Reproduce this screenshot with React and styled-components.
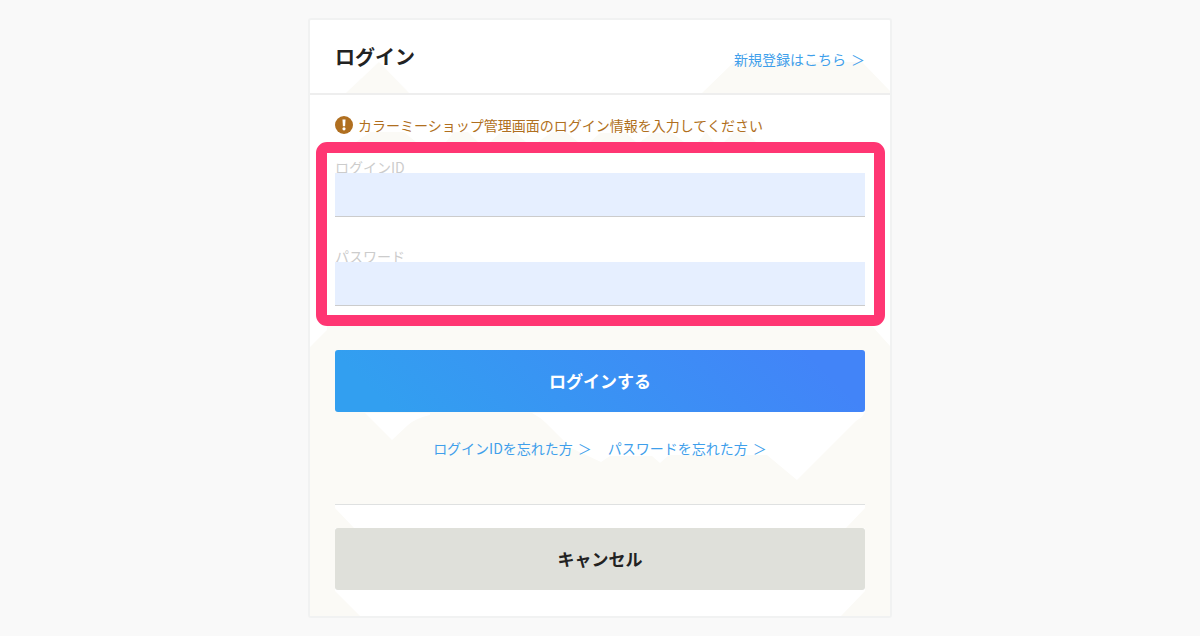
import React, { useState } from "react";
import styled, { createGlobalStyle } from "styled-components";

const App = () => {
  const [loginId, setLoginId] = useState("");
  const [password, setPassword] = useState("");

  return (
    <Page>
      <GlobalStyle />
      <Card>
        <CardPattern />
        <CardHeader>
          <Title>ログイン</Title>
          <ArrowLink href="#signup">新規登録はこちら</ArrowLink>
        </CardHeader>
        <Form onSubmit={(e) => e.preventDefault()}>
          <Notice>
            <NoticeIcon />
            カラーミーショップ管理画面のログイン情報を入力してください
          </Notice>
          <FieldGroup>
            <Field>
              <Label htmlFor="loginId">ログインID</Label>
              <Input
                id="loginId"
                type="text"
                value={loginId}
                onChange={(e) => setLoginId(e.target.value)}
              />
            </Field>
            <Field>
              <Label htmlFor="password">パスワード</Label>
              <Input
                id="password"
                type="password"
                value={password}
                onChange={(e) => setPassword(e.target.value)}
              />
            </Field>
          </FieldGroup>
          <Button type="submit" $primary>
            ログインする
          </Button>
          <HelpLinks>
            <ArrowLink href="#forgot-id">ログインIDを忘れた方</ArrowLink>
            <ArrowLink href="#forgot-password">パスワードを忘れた方</ArrowLink>
          </HelpLinks>
          <Divider />
          <Button type="button">キャンセル</Button>
        </Form>
      </Card>
    </Page>
  );
};

const ArrowLink = ({ href, children }) => (
  <TextLink href={href}>
    {children}
    <span>＞</span>
  </TextLink>
);

const CardPattern = () => (
  <Pattern viewBox="0 0 580 596" preserveAspectRatio="none" aria-hidden="true">
    <path d="M69 42L99 73H36Z" />
    <path d="M424 42H552L580 71V73H392Z" />
    <path d="M46 122L60 112H94L106 122ZM136 122L144 112H158L168 122ZM180 122L190 113H206L216 122ZM228 122L242 112H256L268 122ZM280 122L290 113H316L326 122ZM330 122L342 113H362L374 122ZM388 122L396 112L404 122ZM414 122L424 112H436L446 122Z" />
    <path
      fillRule="evenodd"
      d="M17 306H562L580 326V596H531L555 571V508H536L555 488V485H25V488L44 508H25V571L50 596H0V327L17 310ZM55 393L82 420L98 405Q106 398 120 395V393ZM222 393Q230 397 236 403L261 428L291 442L300 436H342L350 443L359 435H457L487 460L546 401Q555 396 555 390Z"
    />
  </Pattern>
);

const NoticeIcon = () => (
  <svg width="18" height="18" viewBox="0 0 18 18" aria-hidden="true">
    <circle cx="9" cy="9" r="9" fill="#b06f20" />
    <path d="M7.5 3.6h3l-.4 6.6H7.9Z" fill="#fff" />
    <circle cx="9" cy="12.8" r="1.6" fill="#fff" />
  </svg>
);

export default App;

const GlobalStyle = createGlobalStyle`
  * {
    box-sizing: border-box;
  }

  body {
    margin: 0;
    background-color: #f9f9f9;
    color: #222;
    font-family: "Noto Sans CJK JP", sans-serif;
    font-size: 14px;
    line-height: 20px;
  }
`;

const Page = styled.main`
  display: flex;
  justify-content: center;
  align-items: flex-start;
  min-height: 100vh;
  padding: 18px;
`;

const Card = styled.section`
  position: relative;
  width: 100%;
  max-width: 584px;
  background-color: #fff;
  border: 2px solid #f1f2f2;
  border-radius: 3px;
`;

const Pattern = styled.svg`
  position: absolute;
  top: 0;
  left: 0;
  width: 100%;
  height: 100%;
  fill: #fbfaf6;
`;

const CardHeader = styled.header`
  position: relative;
  display: flex;
  justify-content: space-between;
  align-items: baseline;
  padding: 22px 25px 21px;
  border-bottom: 2px solid #eee;
`;

const Title = styled.h1`
  margin: 0;
  font-size: 20px;
  line-height: 30px;
  font-weight: bold;
`;

const TextLink = styled.a`
  display: inline-flex;
  gap: 5px;
  color: #3f9feb;
  text-decoration: none;

  &:hover {
    text-decoration: underline;
  }
`;

const Form = styled.form`
  position: relative;
  padding: 20px 25px 26px;
`;

const Notice = styled.p`
  display: flex;
  align-items: center;
  gap: 5px;
  margin: 0 0 7px;
  color: #b06f20;
`;

const FieldGroup = styled.div`
  display: grid;
  gap: 30px;
  margin: 0 -20px 24px -19px;
  padding: 5px 9px 9px 8px;
  background-color: #fff;
  border: 11px solid #ff3673;
  border-radius: 11px;
`;

const Field = styled.div`
  display: flex;
  flex-direction: column;
`;

const Label = styled.label`
  height: 15px;
  line-height: 18px;
  color: #ccc;
`;

const Input = styled.input`
  position: relative;
  width: 100%;
  height: 44px;
  padding: 0 8px;
  background-color: #e6efff;
  border: none;
  border-bottom: 1px solid #ccc;
  border-radius: 0;
  font: inherit;
  font-size: 17px;
  outline: none;
`;

const Button = styled.button`
  display: block;
  width: 100%;
  padding: 18px;
  background: ${({ $primary }) =>
    $primary ? "linear-gradient(45deg, #329ff0 10%, #4284f8 90%)" : "#dfe0da"};
  border: none;
  border-radius: 3px;
  color: ${({ $primary }) => ($primary ? "#fff" : "#222")};
  font: inherit;
  font-size: 17px;
  line-height: 26px;
  font-weight: bold;
  cursor: pointer;
`;

const HelpLinks = styled.nav`
  display: flex;
  flex-wrap: wrap;
  justify-content: center;
  gap: 16px;
  margin-top: 26px;
`;

const Divider = styled.hr`
  margin: 46px 0 23px;
  border: none;
  border-top: 1px solid #dfe1e1;
`;
